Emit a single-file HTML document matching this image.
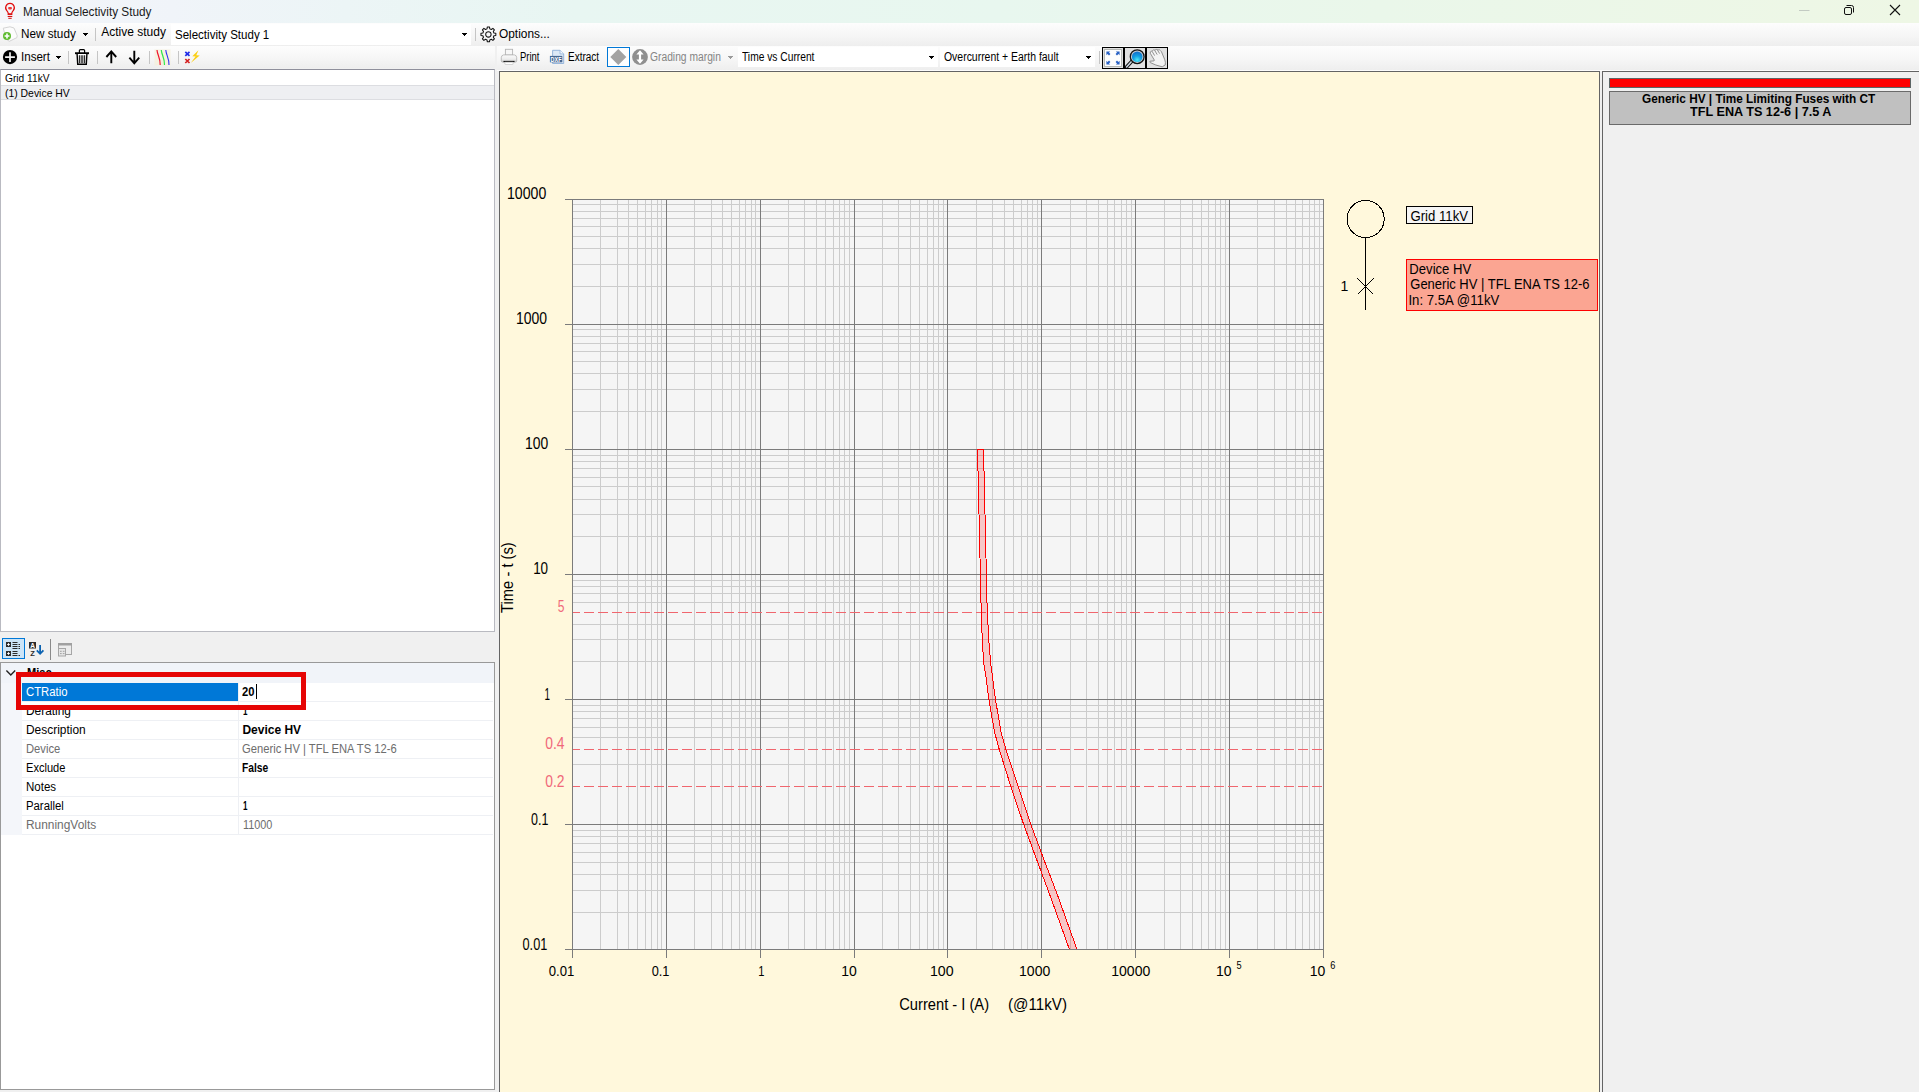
<!DOCTYPE html>
<html lang="en"><head><meta charset="utf-8"><title>Manual Selectivity Study</title>
<style>
html,body{margin:0;padding:0}
body{width:1919px;height:1092px;overflow:hidden;background:#f0f0f0;position:relative;font-family:"Liberation Sans",Arial,sans-serif;font-size:12px;color:#000}
.abs,.t,svg.ic{position:absolute}
.t{white-space:pre;line-height:normal;transform-origin:0 0}
.abs{box-sizing:border-box}
.tb{background:linear-gradient(#fdfdfd,#f6f6f6 55%,#eeeeee)}
.sep{position:absolute;width:1px;background:#c5c5c5}
.combo{position:absolute;background:#fff}
.arrow{position:absolute;width:5px;height:1px;background:#000}
.arrow:before{content:"";position:absolute;left:1px;top:1px;width:3px;height:1px;background:inherit}
.arrow:after{content:"";position:absolute;left:2px;top:2px;width:1px;height:1px;background:inherit}
.row{position:absolute;left:22px;width:471px;height:1px;background:#eef0f4}
</style></head><body>
<div class="abs" id="titlebar" style="left:0;top:0;width:1919px;height:23px;background:linear-gradient(90deg,#f4f6fa 0,#f0f4f9 9%,#ecf5f6 18%,#e8f6f2 30%,#e8f7ef 52%,#eaf7ea 72%,#eef7e5 100%)"></div>
<div class="abs tb" id="toolbar1" style="left:0;top:23px;width:1919px;height:23px"></div>
<div class="combo" style="left:171px;top:24px;width:300px;height:21px"></div>
<div class="arrow" style="left:83px;top:33px"></div>
<div class="arrow" style="left:462px;top:33px"></div>
<div class="sep" style="left:95px;top:28px;height:13px"></div>
<div class="sep" style="left:475px;top:28px;height:13px"></div>
<div class="abs tb" id="toolbar2" style="left:0;top:46px;width:495px;height:22px"></div>
<div class="abs tb" id="charttoolbar" style="left:497px;top:46px;width:1422px;height:24px"></div>
<div class="abs" style="left:497px;top:70px;width:1422px;height:1px;background:#fcfcfc"></div>
<div class="arrow" style="left:56px;top:56px"></div>
<div class="sep" style="left:68px;top:51px;height:13px"></div>
<div class="sep" style="left:97px;top:51px;height:13px"></div>
<div class="sep" style="left:149px;top:51px;height:13px"></div>
<div class="sep" style="left:178px;top:51px;height:13px"></div>
<div class="abs" style="left:607px;top:47px;width:23px;height:20px;border:1px solid #0078d7;background:#fdfeff"></div>
<div class="arrow" style="left:728px;top:56px;background:#9a9a9a"></div>
<div class="combo" style="left:738px;top:47px;width:200px;height:20px"></div>
<div class="arrow" style="left:929px;top:56px"></div>
<div class="combo" style="left:940px;top:47px;width:155px;height:20px"></div>
<div class="arrow" style="left:1086px;top:56px"></div>
<div class="sep" style="left:1099px;top:51px;height:13px"></div>
<div class="abs" style="left:1102px;top:47px;width:22px;height:22px;border:1px solid #000;background:#e1e1e1"></div>
<div class="abs" style="left:1124px;top:47px;width:22px;height:22px;border:1px solid #000;background:#e1e1e1"></div>
<div class="abs" style="left:1146px;top:47px;width:22px;height:22px;border:1px solid #000;background:#e1e1e1"></div>
<div class="abs" id="list" style="left:0;top:69px;width:495px;height:563px;border:1px solid #b9bac1;border-top-color:#8f909c;background:#fff"></div>
<div class="abs" style="left:1px;top:85px;width:493px;height:15px;background:#eeeff2;border-top:1px solid #dcdde1;border-bottom:1px solid #dcdde1"></div>
<div class="abs" style="left:2px;top:638px;width:23px;height:21px;border:1px solid #0078d7;background:#cce4f7"></div>
<div class="abs" style="left:50px;top:639px;width:1px;height:21px;background:#8a8a8a"></div>
<div class="abs" id="grid" style="left:0;top:662px;width:495px;height:428px;border:1px solid #999;background:#fff"></div>
<div class="abs" style="left:1px;top:663px;width:493px;height:20px;background:#f1f4f9"></div>
<div class="abs" style="left:1px;top:683px;width:21px;height:152px;background:#f4f6fa"></div>
<div class="row" style="top:701px"></div>
<div class="row" style="top:720px"></div>
<div class="row" style="top:739px"></div>
<div class="row" style="top:758px"></div>
<div class="row" style="top:777px"></div>
<div class="row" style="top:796px"></div>
<div class="row" style="top:815px"></div>
<div class="row" style="top:834px"></div>
<div class="abs" style="left:238px;top:683px;width:1px;height:152px;background:#eef0f4"></div>
<div class="abs" style="left:22px;top:683px;width:216px;height:18px;background:#0078d7"></div>
<div class="abs" style="left:256px;top:684px;width:1px;height:15px;background:#000"></div>
<div class="abs" id="chartpanel" style="left:499px;top:71px;width:1101px;height:1030px;border:1px solid #646464;background:#fff8dc"></div>
<div class="abs" id="rightpanel" style="left:1602px;top:71px;width:330px;height:1030px;border:1px solid #646464;background:#f0f0f0"></div>
<div class="abs" style="left:1609px;top:78px;width:302px;height:10px;border:1px solid #5c6464;background:#ff0000"></div>
<div class="abs" style="left:1609px;top:91px;width:302px;height:34px;border:1px solid #6a6a6a;background:#c0c0c0"></div>
<svg class="chart" width="1919" height="1092" viewBox="0 0 1919 1092" font-family="'Liberation Sans', Arial, sans-serif" style="position:absolute;left:0;top:0">
<rect x="572" y="199" width="752" height="751" fill="#f5f5f5"/>
<path d="M600.5 199V950M617.5 199V950M628.5 199V950M637.5 199V950M645.5 199V950M651.5 199V950M657.5 199V950M661.5 199V950M694.5 199V950M711.5 199V950M722.5 199V950M731.5 199V950M739.5 199V950M745.5 199V950M751.5 199V950M755.5 199V950M788.5 199V950M804.5 199V950M816.5 199V950M825.5 199V950M833.5 199V950M839.5 199V950M844.5 199V950M849.5 199V950M882.5 199V950M898.5 199V950M910.5 199V950M919.5 199V950M927.5 199V950M933.5 199V950M938.5 199V950M943.5 199V950M976.5 199V950M992.5 199V950M1004.5 199V950M1013.5 199V950M1021.5 199V950M1027.5 199V950M1032.5 199V950M1037.5 199V950M1070.5 199V950M1086.5 199V950M1098.5 199V950M1107.5 199V950M1114.5 199V950M1121.5 199V950M1126.5 199V950M1131.5 199V950M1164.5 199V950M1180.5 199V950M1192.5 199V950M1201.5 199V950M1208.5 199V950M1215.5 199V950M1220.5 199V950M1225.5 199V950M1257.5 199V950M1274.5 199V950M1286.5 199V950M1295.5 199V950M1302.5 199V950M1309.5 199V950M1314.5 199V950M1319.5 199V950M572 286.5H1324M572 264.5H1324M572 248.5H1324M572 236.5H1324M572 226.5H1324M572 218.5H1324M572 211.5H1324M572 204.5H1324M572 411.5H1324M572 389.5H1324M572 373.5H1324M572 361.5H1324M572 351.5H1324M572 343.5H1324M572 336.5H1324M572 329.5H1324M572 536.5H1324M572 514.5H1324M572 499.5H1324M572 486.5H1324M572 477.5H1324M572 468.5H1324M572 461.5H1324M572 455.5H1324M572 661.5H1324M572 639.5H1324M572 624.5H1324M572 602.5H1324M572 593.5H1324M572 586.5H1324M572 580.5H1324M572 764.5H1324M572 737.5H1324M572 727.5H1324M572 718.5H1324M572 711.5H1324M572 705.5H1324M572 912.5H1324M572 890.5H1324M572 874.5H1324M572 862.5H1324M572 852.5H1324M572 843.5H1324M572 836.5H1324M572 830.5H1324" stroke="#cccccc" stroke-width="1" fill="none" shape-rendering="crispEdges"/>
<path d="M572.5 199V958M666.5 199V958M760.5 199V958M854.5 199V958M947.5 199V958M1041.5 199V958M1135.5 199V958M1229.5 199V958M1323.5 199V958M565 199.5H1324M565 324.5H1324M565 449.5H1324M565 574.5H1324M565 699.5H1324M565 824.5H1324M565 949.5H1324" stroke="#7b7b7b" stroke-width="1" fill="none" shape-rendering="crispEdges"/>
<path d="M573 612.5H1323" stroke="#f0666e" stroke-width="1" stroke-dasharray="10 4" stroke-dashoffset="3" shape-rendering="crispEdges"/>
<path d="M573 749.5H1323" stroke="#f0666e" stroke-width="1" stroke-dasharray="10 4" stroke-dashoffset="3" shape-rendering="crispEdges"/>
<path d="M573 786.5H1323" stroke="#f0666e" stroke-width="1" stroke-dasharray="10 4" stroke-dashoffset="3" shape-rendering="crispEdges"/>
<path d="M977.5 449L978 470.6L979 514L980 558L981 603L982 633L983 651.8L984 664.9L986 677L988.8 699L994.5 732L999.4 750L1011 787L1023.7 824.5L1038.3 864L1050.6 897L1069.3 949L1076.8 949L1058.2 897L1045.6 864L1030.8 824.5L1018.2 787L1006 750L1001 732L995.4 699L992.5 677L991 665.8L990 654.8L989 642.7L988 625L987 603L986 558L985 514L984 470.6L983.5 449Z" fill="rgba(255,0,0,0.19)" stroke="none" shape-rendering="crispEdges"/>
<path d="M1069.3 949L1050.6 897L1038.3 864L1023.7 824.5L1011 787L999.4 750L994.5 732L988.8 699L986 677L984 664.9L983 651.8L982 633L981 603L980 558L979 514L978 470.6L977.5 449L983.5 449L984 470.6L985 514L986 558L987 603L988 625L989 642.7L990 654.8L991 665.8L992.5 677L995.4 699L1001 732L1006 750L1018.2 787L1030.8 824.5L1045.6 864L1058.2 897L1076.8 949" fill="none" stroke="#ff0000" stroke-width="1" shape-rendering="crispEdges"/>
<circle cx="1365.6" cy="219" r="18.6" fill="none" stroke="#000" stroke-width="1" shape-rendering="crispEdges"/>
<path d="M1365.5 237.8V310" stroke="#000" stroke-width="1" shape-rendering="crispEdges"/>
<path d="M1357.5 278.5L1373.5 294.5M1373.5 278.5L1357.5 294.5" stroke="#000" stroke-width="1" shape-rendering="crispEdges"/>
<rect x="1406.5" y="206.5" width="66" height="17" fill="#f5f5f5" stroke="#000"/>
<rect x="1406.5" y="259.5" width="191" height="51" fill="#fba592" stroke="#ff0000"/>
<text transform="translate(507.01 199.20) scale(0.8945 1)" font-size="15.8">10000</text>
<text transform="translate(516.02 324.20) scale(0.8845 1)" font-size="15.8">1000</text>
<text transform="translate(524.92 449.20) scale(0.8798 1)" font-size="15.8">100</text>
<text transform="translate(533.15 574.20) scale(0.8516 1)" font-size="15.8">10</text>
<text transform="translate(544.38 700.00) scale(0.6241 1)" font-size="15.8">1</text>
<text transform="translate(531.00 825.00) scale(0.7889 1)" font-size="15.8">0.1</text>
<text transform="translate(522.50 950.00) scale(0.8074 1)" font-size="15.8">0.01</text>
<text transform="translate(557.80 612.00) scale(0.7434 1)" font-size="16.2" fill="#f0687a">5</text>
<text transform="translate(545.20 749.00) scale(0.8573 1)" font-size="16.2" fill="#f0687a">0.4</text>
<text transform="translate(545.20 786.50) scale(0.8573 1)" font-size="16.2" fill="#f0687a">0.2</text>
<text transform="translate(548.75 976.00) scale(0.8749 1)" font-size="15">0.01</text>
<text transform="translate(651.70 976.00) scale(0.8529 1)" font-size="15">0.1</text>
<text transform="translate(758.36 976.00) scale(0.7427 1)" font-size="15">1</text>
<text transform="translate(841.17 976.00) scale(0.9319 1)" font-size="15">10</text>
<text transform="translate(929.95 976.00) scale(0.9456 1)" font-size="15">100</text>
<text transform="translate(1019.06 976.00) scale(0.9365 1)" font-size="15">1000</text>
<text transform="translate(1111.26 976.00) scale(0.9362 1)" font-size="15">10000</text>
<text transform="translate(1216.07 976.00) scale(0.9319 1)" font-size="15">10</text>
<text transform="translate(1309.77 976.00) scale(0.9319 1)" font-size="15">10</text>
<text transform="translate(1236.40 969.00) scale(0.9200 1)" font-size="10">5</text>
<text transform="translate(1330.30 969.00) scale(0.9200 1)" font-size="10">6</text>
<text transform="translate(899.20 1009.90) scale(0.9193 1)" font-size="16">Current - I (A)</text>
<text transform="translate(1008.05 1009.90) scale(0.9481 1)" font-size="16">(@11kV)</text>
<text transform="translate(512.70 612.90) rotate(-90) scale(0.9214 1)" font-size="16">Time - t (s)</text>
<text transform="translate(1340.60 290.90) scale(0.9500 1)" font-size="14.8">1</text>
<text transform="translate(1410.40 221.10) scale(0.8989 1)" font-size="14.67">Grid 11kV</text>
<text transform="translate(1409.36 273.60) scale(0.9361 1)" font-size="14">Device HV</text>
<text transform="translate(1410.30 289.10) scale(0.9274 1)" font-size="14">Generic HV | TFL ENA TS 12-6</text>
<text transform="translate(1408.46 305.00) scale(0.9425 1)" font-size="14">In: 7.5A @11kV</text>
</svg>
<svg class="ic" style="left:3px;top:1px" width="14" height="20" viewBox="0 0 14 20" ><path d="M7 2.500a4.300 4.300 0 0 0-3.200 7.200c.9 1 1.400 1.900 1.500 3.100h3.400c.1-1.200.6-2.100 1.500-3.100A4.300 4.300 0 0 0 7 2.500z" fill="none" stroke="#e00b0b" stroke-width="1.250"/><path d="M4.700 13.600h4.600M4.700 15.500h4.600M5.300 17.300h3.400" stroke="#d81010" stroke-width="1"/><rect x="5.200" y="5.900" width="3.700" height="2.500" rx="0.800" fill="#ee3a3a"/></svg>
<svg class="ic" style="left:1px;top:25px" width="18" height="19" viewBox="0 0 18 19" ><path d="M2.3 3.2L9 1.8l4 1.2 3.2 7.6-0.3 2L8.4 16.3 5 14z" fill="#fcfcfc" stroke="#cfcfcf" stroke-width="0.9"/><circle cx="6" cy="11" r="4" fill="#5fbb2f"/><path d="M6 8.6v4.8M3.6 11h4.8" stroke="#fff" stroke-width="1.6"/></svg>
<svg class="ic" style="left:2px;top:49px" width="16" height="16" viewBox="0 0 16 16" ><circle cx="8" cy="8.1" r="7.1" fill="#000"/><path d="M8 3.2v9.8M3.1 8.1h9.8" stroke="#f2f2f2" stroke-width="1.7"/></svg>
<svg class="ic" style="left:74px;top:48px" width="16" height="18" viewBox="0 0 16 18" ><path d="M5.4 5V2.6q0-1 1-1h3.2q1 0 1 1V5" fill="none" stroke="#000" stroke-width="1.2"/><path d="M1 5.2h14" stroke="#000" stroke-width="1.9"/><path d="M3.1 6l.6 10.3h8.6L12.900 6" fill="#fff" stroke="#000" stroke-width="1.4"/><path d="M5.6 7.2v8M8 7.2v8M10.4 7.2v8" stroke="#2a2a2a" stroke-width="1.5"/></svg>
<svg class="ic" style="left:104px;top:49px" width="15" height="16" viewBox="0 0 15 16" ><path d="M7.3 14.3V2.6M2.4 8L7.3 2.4 12.2 8" fill="none" stroke="#000" stroke-width="1.900"/></svg>
<svg class="ic" style="left:127px;top:49px" width="15" height="16" viewBox="0 0 15 16" ><path d="M7.3 1.8v12.2M2.4 8.6l4.9 5.7 4.9-5.700" fill="none" stroke="#000" stroke-width="1.900"/></svg>
<svg class="ic" style="left:154px;top:49px" width="17" height="17" viewBox="0 0 17 17" ><rect x="0.5" y="0.5" width="16" height="16" fill="#f6efd9" opacity="0.75"/><path d="M3 1c.3 5 3.300 7.500 3.200 15" fill="none" stroke="#f0152f" stroke-width="1.2"/><path d="M7.300 1c.3 5 3.300 7.500 3.200 15" fill="none" stroke="#2ce84a" stroke-width="1.2"/><path d="M11.800 1c.3 5 3.300 7.500 3.200 15" fill="none" stroke="#2b35f3" stroke-width="1.100"/></svg>
<svg class="ic" style="left:184px;top:49px" width="17" height="17" viewBox="0 0 17 17" ><path d="M1.300 2.800l4.200 4M5.500 2.800l-4.200 4" stroke="#1f2be8" stroke-width="1.700"/><path d="M1.300 10l4.200 4M5.500 10l-4.200 4" stroke="#d42020" stroke-width="1.700"/><path d="M14.400 1.200L8.300 7.300l3.300.3-4.900 6.500 9-7.600-3.400-.3z" fill="#fbcf14"/></svg>
<svg class="ic" style="left:480px;top:26px" width="17" height="17" viewBox="0 0 17 17" ><g transform="translate(8.4 8.4)" fill="none" stroke="#111" stroke-width="1.05"><path d="M5.52 -1.41L7.43 -1.05L7.43 1.05L5.52 1.41L4.90 2.91L5.99 4.51L4.51 5.99L2.91 4.90L1.41 5.52L1.05 7.43L-1.05 7.43L-1.41 5.52L-2.91 4.90L-4.51 5.99L-5.99 4.51L-4.90 2.91L-5.52 1.41L-7.43 1.05L-7.43 -1.05L-5.52 -1.41L-4.90 -2.91L-5.99 -4.51L-4.51 -5.99L-2.91 -4.90L-1.41 -5.52L-1.05 -7.43L1.05 -7.43L1.41 -5.52L2.91 -4.90L4.51 -5.99L5.99 -4.51L4.90 -2.91Z" stroke-linejoin="round"/><circle r="2.7"/></g></svg>
<svg class="ic" style="left:500px;top:48px" width="18" height="18" viewBox="0 0 18 18" ><defs><linearGradient id="pg" x1="0" y1="0" x2="0" y2="1"><stop offset="0" stop-color="#fbfbfb"/><stop offset="0.6" stop-color="#ececec"/><stop offset="1" stop-color="#c4c4c4"/></linearGradient></defs><rect x="5.400" y="1.300" width="7.200" height="5.800" fill="#f7f7f7" stroke="#b4b4b4" stroke-width="0.9"/><path d="M3.600 6.900Q1.300 7.300 1.300 9.600v3.200q0 1.300 1.300 1.300h12.800q1.300 0 1.300-1.300V9.600q0-2.300-2.300-2.700z" fill="url(#pg)" stroke="#b0b0b0" stroke-width="0.8"/><path d="M3.500 13.500h11" stroke="#0c0c0c" stroke-width="1.200"/><path d="M4.600 14.200h8.800l-.6 2.300H5.200z" fill="#ffffff" stroke="#c6c6c6" stroke-width="0.700"/></svg>
<svg class="ic" style="left:549px;top:49px" width="16" height="16" viewBox="0 0 16 16" ><path d="M3.600 1.300h7.400l3.700 3.600v9.600H3.600z" fill="#dde9f6" stroke="#8fb0d8" stroke-width="0.9"/><path d="M11 1.300v3.600h3.700" fill="#f4f8fd" stroke="#8fb0d8" stroke-width="0.8"/><rect x="0.900" y="6.900" width="12.400" height="6.400" fill="#476892"/><text x="7.100" y="12.500" font-size="6.600" font-weight="700" fill="#fff" text-anchor="middle" font-family="Liberation Sans,Arial,sans-serif" textLength="11" lengthAdjust="spacingAndGlyphs">DXF</text></svg>
<svg class="ic" style="left:609px;top:48px" width="19" height="18" viewBox="0 0 19 18" ><path d="M9.300 1L17.300 9 9.300 17 1.300 9z" fill="#a3a3a3"/></svg>
<svg class="ic" style="left:631px;top:48px" width="18" height="18" viewBox="0 0 18 18" ><circle cx="9" cy="9" r="7.900" fill="#8f8f8f"/><path d="M9 2.300l3.600 4.200h-2.500v5h2.500L9 15.700 5.400 11.500h2.500v-5H5.400z" fill="#fff"/></svg>
<svg class="ic" style="left:1103px;top:48px" width="20" height="20" viewBox="0 0 20 20" ><rect x="1.500" y="1.500" width="17" height="17" fill="#fdfdfd" stroke="#b5b8b5" stroke-width="1"/><g fill="#2a62c4"><path d="M3.400 3.400h3.800L6 4.600 7.400 6 6 7.400 4.600 6 3.400 7.200z"/><path d="M16.600 3.400v3.800L15.400 6 14 7.400 12.600 6 14 4.600 12.800 3.400z"/><path d="M3.400 16.600v-3.800L4.600 14 6 12.600 7.400 14 6 15.400 7.200 16.600z"/><path d="M16.600 16.600h-3.800L14 15.400 12.600 14 14 12.600 15.400 14 16.600 12.800z"/></g></svg>
<svg class="ic" style="left:1125px;top:48px" width="20" height="20" viewBox="0 0 20 20" ><defs><radialGradient id="lg" cx="0.5" cy="0.8" r="0.75"><stop offset="0" stop-color="#4fe9f5"/><stop offset="0.5" stop-color="#139fe0"/><stop offset="1" stop-color="#1272cc"/></radialGradient></defs><path d="M1.200 19.300L7.400 12.600" stroke="#111" stroke-width="3.600" stroke-linecap="round"/><path d="M1.600 18.900L7.200 12.800" stroke="#cdd8e2" stroke-width="1.500" stroke-linecap="round"/><circle cx="12.200" cy="8.700" r="6.900" fill="#c8cdd2" stroke="#151515" stroke-width="1.300"/><circle cx="12.200" cy="8.700" r="5.300" fill="url(#lg)"/></svg>
<svg class="ic" style="left:1147px;top:48px" width="20" height="20" viewBox="0 0 20 20" ><path d="M7.400 12.200L3.300 5.300Q2.800 3.600 4.300 3.300L5.600 2.600Q6.300 1.600 7.600 2L8.800 1.700Q9.800 1 10.800 1.800L11.600 1.800Q12.800 1.600 13.400 2.600L14.400 3.600L17.800 11.800Q18.800 14.500 18.200 17L15.200 18.800L8.800 17L3.300 14.600Q2.400 13.900 3 13.200L7 12.900Z" fill="#f3f3f3" stroke="#868686" stroke-width="0.9" stroke-linejoin="round"/><path d="M5 3.200L7.600 7.600M7.600 2.200L10.200 6.600M10.400 1.900L12.600 5.600" stroke="#868686" stroke-width="0.9" fill="none"/></svg>
<svg class="ic" style="left:4px;top:640px" width="20" height="18" viewBox="0 0 20 18" ><g fill="#2b2b2b"><rect x="2" y="2" width="5" height="5"/><rect x="2" y="11" width="5" height="5"/></g><path d="M3.200 4.500h2.600M4.500 3.200v2.600M3.200 13.500h2.600M4.500 12.200v2.600" stroke="#fff" stroke-width="1"/><path d="M8.500 2.500h5M8.500 4.500h5M8.500 6.500h5M8.500 8.500h5M8.500 11.500h5M8.500 13.500h5M8.500 15.500h5" stroke="#2b2b2b" stroke-width="1" stroke-dasharray="5 1.500 1.500 0"/><path d="M14.500 4.500h1.500M14.500 6.500h1.500M14.500 8.500h1.500M14.500 15.500h1.500" stroke="#2b2b2b" stroke-width="1"/></svg>
<svg class="ic" style="left:28px;top:640px" width="18" height="18" viewBox="0 0 18 18" ><rect x="1" y="2" width="7" height="6.500" fill="#2b2b2b"/><text x="4.500" y="7.800" font-size="6.500" font-weight="700" fill="#fff" text-anchor="middle" font-family="Liberation Sans,Arial,sans-serif">A</text><text x="4.600" y="15.800" font-size="7.500" font-weight="700" fill="#2b2b2b" text-anchor="middle" font-family="Liberation Sans,Arial,sans-serif">Z</text><path d="M12.100 5v8.500M8.800 10.400l3.300 3.400 3.300-3.400" fill="none" stroke="#0b62b0" stroke-width="1.800"/></svg>
<svg class="ic" style="left:57px;top:642px" width="16" height="15" viewBox="0 0 16 15" ><rect x="1.500" y="1.500" width="13" height="11" fill="#ececec" stroke="#a6a6a6"/><rect x="1" y="1" width="14" height="2.500" fill="#a0a0a0"/><rect x="1.500" y="6.500" width="7" height="7.500" fill="#e6e6e6" stroke="#a6a6a6"/><path d="M3 9.300h1.700M5.800 9.300h1.700M3 11.600h1.700M5.800 11.600h1.700" stroke="#a0a0a0" stroke-width="1"/></svg>
<svg class="ic" style="left:5px;top:668px" width="12" height="10" viewBox="0 0 12 10" ><path d="M1.400 2.600L5.800 7 10.200 2.600" fill="none" stroke="#222" stroke-width="1.400"/></svg>
<svg class="ic" style="left:1796px;top:2px" width="18" height="18" viewBox="0 0 18 18" ><path d="M3 8.500h10.500" stroke="#c3cbc3" stroke-width="1"/></svg>
<svg class="ic" style="left:1841px;top:2px" width="18" height="18" viewBox="0 0 18 18" ><rect x="3.500" y="5.500" width="7" height="7" rx="1.500" fill="none" stroke="#111" stroke-width="1"/><path d="M5.500 3.500h5q2 0 2 2v5" fill="none" stroke="#111" stroke-width="1"/></svg>
<svg class="ic" style="left:1886px;top:2px" width="18" height="18" viewBox="0 0 18 18" ><path d="M4 3l10 10M14 3L4 13" stroke="#111" stroke-width="1.100"/></svg>
<span class="t" style="left:23.20px;top:5.00px;font-size:12px;color:#1b1b1b;transform:scaleX(0.9829);">Manual Selectivity Study</span>
<span class="t" style="left:20.80px;top:27.00px;font-size:12px;transform:scaleX(0.9780);">New study</span>
<span class="t" style="left:101.20px;top:25.00px;font-size:12px;">Active study</span>
<span class="t" style="left:175.20px;top:28.00px;font-size:12px;transform:scaleX(0.9616);">Selectivity Study 1</span>
<span class="t" style="left:499.40px;top:26.80px;font-size:12px;transform:scaleX(0.9897);">Options...</span>
<span class="t" style="left:21.14px;top:49.80px;font-size:12px;transform:scaleX(0.9636);">Insert</span>
<span class="t" style="left:520.10px;top:49.80px;font-size:12px;transform:scaleX(0.7888);">Print</span>
<span class="t" style="left:568.20px;top:49.80px;font-size:12px;transform:scaleX(0.8314);">Extract</span>
<span class="t" style="left:650.40px;top:49.80px;font-size:12px;color:#858585;transform:scaleX(0.8568);">Grading margin</span>
<span class="t" style="left:742.00px;top:49.80px;font-size:12px;transform:scaleX(0.8531);">Time vs Current</span>
<span class="t" style="left:943.60px;top:49.80px;font-size:12px;transform:scaleX(0.8701);">Overcurrent + Earth fault</span>
<span class="t" style="left:4.50px;top:71.70px;font-size:11px;transform:scaleX(0.9270);">Grid 11kV</span>
<span class="t" style="left:4.50px;top:86.60px;font-size:11px;transform:scaleX(0.9460);">(1) Device HV</span>
<span class="t" style="left:26.80px;top:665.50px;font-size:12px;font-weight:700;transform:scaleX(0.9255);">Misc</span>
<span class="t" style="left:26.30px;top:684.80px;font-size:12px;color:#fff;transform:scaleX(0.9427);">CTRatio</span>
<span class="t" style="left:26.30px;top:703.80px;font-size:12px;transform:scaleX(0.9891);">Derating</span>
<span class="t" style="left:26.30px;top:722.80px;font-size:12px;transform:scaleX(0.9940);">Description</span>
<span class="t" style="left:26.30px;top:741.80px;font-size:12px;color:#6d6d6d;transform:scaleX(0.9348);">Device</span>
<span class="t" style="left:26.30px;top:760.80px;font-size:12px;transform:scaleX(0.9226);">Exclude</span>
<span class="t" style="left:26.30px;top:779.80px;font-size:12px;transform:scaleX(0.9598);">Notes</span>
<span class="t" style="left:26.30px;top:798.80px;font-size:12px;transform:scaleX(0.9450);">Parallel</span>
<span class="t" style="left:26.30px;top:817.80px;font-size:12px;color:#6d6d6d;transform:scaleX(0.9927);">RunningVolts</span>
<span class="t" style="left:242.20px;top:685.00px;font-size:12px;font-weight:700;transform:scaleX(0.9353);">20</span>
<span class="t" style="left:242.80px;top:703.60px;font-size:12px;font-weight:700;transform:scaleX(0.6701);">1</span>
<span class="t" style="left:242.40px;top:722.60px;font-size:12px;font-weight:700;">Device HV</span>
<span class="t" style="left:242.40px;top:741.60px;font-size:12px;color:#6d6d6d;transform:scaleX(0.9339);">Generic HV | TFL ENA TS 12-6</span>
<span class="t" style="left:242.40px;top:760.60px;font-size:12px;font-weight:700;transform:scaleX(0.8545);">False</span>
<span class="t" style="left:242.80px;top:798.60px;font-size:12px;font-weight:700;transform:scaleX(0.6701);">1</span>
<span class="t" style="left:242.60px;top:817.60px;font-size:12px;color:#6d6d6d;transform:scaleX(0.9052);">11000</span>
<span class="t" style="left:1641.60px;top:91.80px;font-size:12px;font-weight:700;transform:scaleX(0.9829);">Generic HV | Time Limiting Fuses with CT</span>
<span class="t" style="left:1690.00px;top:104.70px;font-size:12px;font-weight:700;transform:scaleX(1.0534);">TFL ENA TS 12-6 | 7.5 A</span>
<div class="abs" id="highlight" style="left:16px;top:672px;width:290px;height:38px;border:5px solid #e60505"></div>
</body></html>
